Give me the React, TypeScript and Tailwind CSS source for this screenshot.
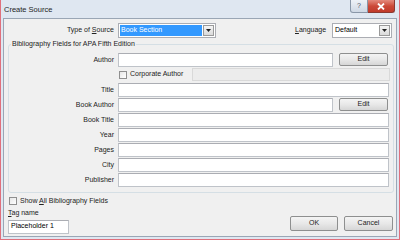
import React from 'react';

const font = "font-['Liberation_Sans',Arial,sans-serif]";

const TextBox: React.FC<{ className?: string; value?: string }> = ({ className = '', value }) => (
  <div
    className={`h-[14px] bg-white border border-[#bfc3c9] border-t-[#abadb3] px-[2px] flex items-center text-[7px] text-black ${className}`}
  >
    {value}
  </div>
);

const Button: React.FC<{ label: string; className?: string }> = ({ label, className = '' }) => (
  <div
    className={`flex items-center justify-center rounded-[2px] border border-[#8e8f8f] bg-gradient-to-b from-[#f4f4f4] via-[#e8e8e8] to-[#d6d6d6] text-[7px] text-[#222] ${className}`}
  >
    {label}
  </div>
);

const Check: React.FC = () => (
  <div className="w-[8px] h-[8px] border border-[#8f8f8f] bg-gradient-to-br from-[#e6e6e6] to-white shrink-0" />
);

const Combo: React.FC<{ value: string; selected?: boolean; className?: string }> = ({ value, selected, className = '' }) => (
  <div className={`h-[15px] bg-white border border-[#abadb3] flex items-stretch p-[1px] ${className}`}>
    <div
      className={`flex-1 flex items-center px-[1px] text-[7px] ${selected ? 'bg-[#3399ff] text-white' : 'text-black'}`}
    >
      {value}
    </div>
    <div className="w-[11px] ml-[1px] border border-[#9a9a9a] bg-gradient-to-b from-[#f5f5f5] to-[#dadada] flex items-center justify-center">
      <svg width="5" height="3" viewBox="0 0 5 3">
        <path d="M0 0h5L2.5 3z" fill="#222" />
      </svg>
    </div>
  </div>
);

const Row: React.FC<{ label: string; edit?: boolean }> = ({ label, edit }) => (
  <div className="flex items-center h-[14px]">
    <div className="w-[109px] pr-[4px] text-right text-[7px] leading-[14px] text-[#222]">{label}</div>
    <TextBox className={edit ? 'w-[215px]' : 'w-[271px]'} />
    {edit && <Button label="Edit" className="w-[49px] h-[13px] ml-[6px]" />}
  </div>
);

export default function App() {
  return (
    <div className={`w-[400px] h-[240px] bg-[#dfe7f1] border-x border-b border-[#e0707c] flex flex-col ${font}`}>
      <div className="h-[18px] flex items-start justify-between pl-[3px] pr-[4px]">
        <div className="pt-[4px] text-[7.5px] text-[#1e1e1e]">Create Source</div>
        <div className="flex">
          <div className="w-[18px] h-[13px] rounded-bl-[3px] border border-t-0 border-[#8a97a8] bg-gradient-to-b from-[#eef2f7] to-[#cfd8e4] flex items-center justify-center text-[7px] text-[#4a5566]">
            ?
          </div>
          <div className="w-[27px] h-[13px] rounded-br-[3px] border border-l-0 border-t-0 border-[#8a3a32] bg-gradient-to-b from-[#e38a7d] via-[#cc4a39] to-[#c03b2b] flex items-center justify-center">
            <svg width="8" height="7" viewBox="0 0 8 7">
              <path d="M1 0.5l6 6M7 0.5l-6 6" stroke="#fff" strokeWidth="1.8" />
            </svg>
          </div>
        </div>
      </div>
      <div className="flex-1 mx-[2px] mb-[2px] border border-[#9aa6b5] bg-[#f0f0f0] flex flex-col pl-[4px] pr-[2px]">
        <div className="flex items-center mt-[4px]">
          <div className="w-[110px] pr-[4px] text-right text-[7px] text-[#222]">
            Type of <span className="underline">S</span>ource
          </div>
          <Combo value="Book Section" selected className="w-[98px]" />
          <div className="ml-[79px] w-[37px] text-[7px] text-[#222]">
            <span className="underline">L</span>anguage
          </div>
          <Combo value="Default" className="w-[60px]" />
        </div>
        <fieldset className="mt-[1px] border border-[#d5dfe5] rounded-[3px] pl-0 pr-[4px] pb-[5px] w-[385px]">
          <legend className="ml-[2px] text-[7px] text-[#222] px-[1px]">Bibliography Fields for APA Fifth Edition</legend>
          <div className="flex flex-col gap-[1px] mt-[3px]">
            <Row label="Author" edit />
            <div className="flex items-center h-[14px]">
              <div className="w-[110px]" />
              <Check />
              <div className="ml-[3px] text-[7px] text-[#222] w-[62px]">Corporate Author</div>
              <div className="h-[13px] flex-1 border border-[#d9d9d9] bg-[#ececec] -mr-[1px]" />
            </div>
            <Row label="Title" />
            <Row label="Book Author" edit />
            <Row label="Book Title" />
            <Row label="Year" />
            <Row label="Pages" />
            <Row label="City" />
            <Row label="Publisher" />
          </div>
        </fieldset>
        <div className="flex items-center mt-[3px] ml-[1px]">
          <Check />
          <div className="ml-[3px] text-[7px] text-[#222]">
            Show <span className="underline">A</span>ll Bibliography Fields
          </div>
        </div>
        <div className="flex items-end justify-between mt-[2px]">
          <div className="flex flex-col">
            <div className="text-[7px] text-[#222]">
              <span className="underline">T</span>ag name
            </div>
            <TextBox value="Placeholder 1" className="w-[61px] mt-[1px] h-[13px]" />
          </div>
          <div className="flex gap-[6px] mb-[3px] mr-[1px]">
            <Button label="OK" className="w-[48px] h-[15px] border-[#3c7fb1]" />
            <Button label="Cancel" className="w-[49px] h-[15px]" />
          </div>
        </div>
      </div>
    </div>
  );
}
